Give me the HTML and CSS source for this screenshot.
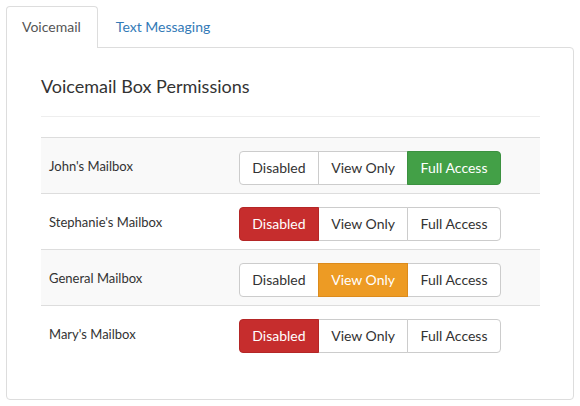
FILE: index.html
```html
<!DOCTYPE html>
<html>
<head>
<meta charset="utf-8">
<link rel="stylesheet" href="styles.css">
</head>
<body>
<div class="tabs">
  <div class="tab active">Voicemail</div>
  <div class="tab link">Text Messaging</div>
</div>
<div class="panel">
  <h2 class="title">Voicemail Box Permissions</h2>
  <div class="table">
    <div class="row striped">
      <div class="label">John's Mailbox</div>
      <div class="cell">
        <div class="btn-group">
          <span class="btn">Disabled</span><span class="btn">View Only</span><span class="btn btn-green">Full Access</span>
        </div>
      </div>
    </div>
    <div class="row">
      <div class="label">Stephanie's Mailbox</div>
      <div class="cell">
        <div class="btn-group">
          <span class="btn btn-red">Disabled</span><span class="btn">View Only</span><span class="btn">Full Access</span>
        </div>
      </div>
    </div>
    <div class="row striped">
      <div class="label">General Mailbox</div>
      <div class="cell">
        <div class="btn-group">
          <span class="btn">Disabled</span><span class="btn btn-orange">View Only</span><span class="btn">Full Access</span>
        </div>
      </div>
    </div>
    <div class="row">
      <div class="label">Mary's Mailbox</div>
      <div class="cell">
        <div class="btn-group">
          <span class="btn btn-red">Disabled</span><span class="btn">View Only</span><span class="btn">Full Access</span>
        </div>
      </div>
    </div>
  </div>
</div>
</body>
</html>
```

FILE: styles.css
```css
html, body {
  margin: 0;
  padding: 0;
  background: #fff;
}
body {
  padding: 6px 6px 0 6px;
  font-family: Lato, "Open Sans", sans-serif;
  color: #333;
}
.tabs {
  display: flex;
  position: relative;
  z-index: 1;
  margin-bottom: -1px;
}
.tab {
  font-size: 14px;
  line-height: 20px;
  padding: 10px 15px 10px 15px;
  border: 1px solid transparent;
  border-bottom: 0;
  border-radius: 4px 4px 0 0;
}
.tab.active {
  color: #555;
  border-color: #ddd;
  background: #fff;
  padding-right: 16px;
  padding-bottom: 11px;
}
.tab.link {
  color: #337ab7;
  margin-left: 2px;
}
.panel {
  box-sizing: border-box;
  width: 568px;
  height: 353px;
  border: 1px solid #ddd;
  border-radius: 0 4px 4px 4px;
  padding: 0 33px 0 34px;
}
.title {
  margin: 0;
  padding: 28px 0 20px 0;
  font-size: 18px;
  line-height: 20px;
  font-weight: 400;
  color: #333;
  border-bottom: 1px solid #eee;
}
.table {
  margin-top: 20px;
}
.row {
  display: flex;
  align-items: center;
  border-top: 1px solid #ddd;
  height: 55px;
}
.row.striped {
  background: #f9f9f9;
}
.label {
  box-sizing: border-box;
  width: 190px;
  padding-left: 8px;
  font-size: 13px;
  line-height: 18px;
}
.cell {
  align-self: flex-start;
  padding: 13px 8px 8px 8px;
}
.btn-group {
  display: flex;
}
.btn {
  box-sizing: border-box;
  height: 34px;
  padding: 6px 12.3px;
  font-size: 14px;
  line-height: 20px;
  color: #333;
  background: #fff;
  border: 1px solid #ccc;
  margin-left: -1px;
  white-space: nowrap;
}
.btn:first-child {
  margin-left: 0;
  border-radius: 4px 0 0 4px;
}
.btn:last-child {
  border-radius: 0 4px 4px 0;
}
.btn-green {
  background: #43a047;
  border-color: #3b9140;
  color: #fff;
  position: relative;
}
.btn-red {
  background: #c62d2d;
  border-color: #b42626;
  color: #fff;
  position: relative;
}
.btn-orange {
  background: #ed9b24;
  border-color: #dc8b1c;
  color: #fff;
  position: relative;
}
```
